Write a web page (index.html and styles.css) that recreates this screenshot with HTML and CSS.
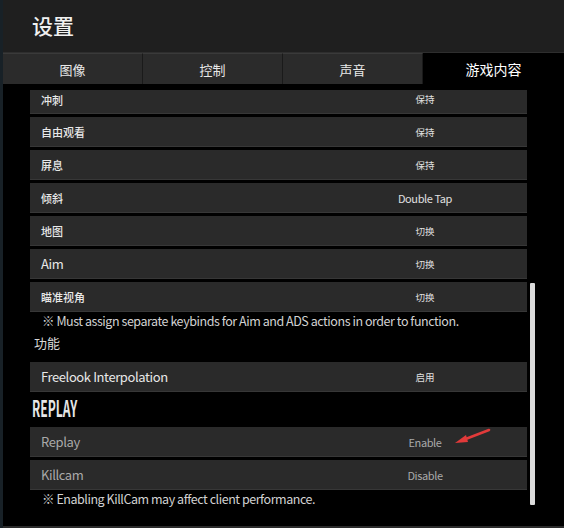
FILE: index.html
```html
<!DOCTYPE html>
<html lang="zh">
<head>
    <meta charset="UTF-8">
    <meta name="viewport" content="width=device-width, initial-scale=1.0">
    <title>设置</title>
    <link rel="stylesheet" href="styles.css">
</head>
<body>
    <div class="window">
        <div class="header">
            <h1 class="title">设置</h1>
        </div>
        <div class="tabs">
            <div class="tab">图像</div>
            <div class="tab">控制</div>
            <div class="tab">声音</div>
            <div class="tab active">游戏内容</div>
        </div>

        <div class="content">
            <div class="row cut"><span class="label">冲刺</span><span class="value">保持</span></div>
            <div class="row"><span class="label">自由观看</span><span class="value">保持</span></div>
            <div class="row"><span class="label">屏息</span><span class="value">保持</span></div>
            <div class="row"><span class="label">倾斜</span><span class="value latin">Double Tap</span></div>
            <div class="row"><span class="label">地图</span><span class="value">切换</span></div>
            <div class="row"><span class="label latin big">Aim</span><span class="value">切换</span></div>
            <div class="row"><span class="label">瞄准视角</span><span class="value">切换</span></div>
            <p class="note">※ Must assign separate keybinds for Aim and ADS actions in order to function.</p>

            <h3 class="section">功能</h3>
            <div class="row"><span class="label latin big">Freelook Interpolation</span><span class="value">启用</span></div>

            <h2 class="replay-title">REPLAY</h2>
            <div class="row dim"><span class="label latin big">Replay</span><span class="value latin">Enable</span></div>
            <div class="row dim"><span class="label latin big">Killcam</span><span class="value latin">Disable</span></div>
            <p class="note">※ Enabling KillCam may affect client performance.</p>

            <div class="scrollbar"></div>
            <svg class="arrow" width="40" height="20" viewBox="0 0 40 20">
                <path d="M36 2 L10 12" stroke="#e23a3a" stroke-width="2.5" stroke-linecap="round"/>
                <path d="M2 15 L13 7 L15 14 Z" fill="#e23a3a"/>
            </svg>
        </div>
        <div class="footer"></div>
    </div>
</body>
</html>
```

FILE: styles.css
```css
/* settings screen */
body {
    margin: 0;
    padding: 0;
    background-color: #000;
    font-family: "Noto Sans CJK SC", sans-serif;
    color: #e4e4e4;
}
.window {
    width: 564px;
    height: 528px;
    display: flex;
    flex-direction: column;
    border-left: 3px solid #182127;
    box-sizing: border-box;
    overflow: hidden;
}
.header {
    height: 53px;
    background-color: #1f1f1f;
    border-bottom: 1px solid #2e2e2e;
    box-sizing: border-box;
    padding: 11px 0 0 29px;
}
.title {
    margin: 0;
    font-size: 21px;
    font-weight: 500;
    line-height: 28px;
    color: #f0f0f0;
}
.tabs {
    display: flex;
    height: 31px;
}
.tab {
    width: 140px;
    background-color: #2b2b2b;
    border-right: 1px solid #1a1a1a;
    border-top: 1px solid #3a3a3a;
    box-sizing: border-box;
    display: flex;
    align-items: center;
    justify-content: center;
    font-size: 13px;
    color: #e8e8e8;
}
.tab.active {
    flex: 1;
    background-color: #000;
    border: none;
    font-size: 14px;
    color: #fff;
}
.content {
    position: relative;
    flex: 1;
    padding: 6px 37px 0 27px;
    display: flex;
    flex-direction: column;
}
.row {
    height: 30px;
    margin-bottom: 3px;
    background-color: #2a2a2a;
    border-bottom: 1px solid #373737;
    box-sizing: border-box;
    display: flex;
    align-items: center;
    justify-content: space-between;
    padding-left: 11px;
}
.row.cut {
    height: 24px;
    align-items: flex-start;
    padding-top: 2px;
}
.label {
    font-size: 11px;
    font-weight: 500;
    color: #e8e8e8;
}
.value {
    width: 204px;
    text-align: center;
    font-size: 9.5px;
    color: #e0e0e0;
}
.latin {
    letter-spacing: -0.4px;
}
.value.latin {
    font-size: 11px;
}
.label.big {
    font-size: 13px;
    font-weight: normal;
}
.row.dim .label,
.row.dim .value {
    color: #a9a9a9;
}
.note {
    margin: -3px 0 0 12px;
    height: 17px;
    line-height: 17px;
    font-size: 12.5px;
    letter-spacing: -0.45px;
    color: #d2d2d2;
}
.section {
    margin: 5px 0 10px 4px;
    font-size: 13px;
    font-weight: normal;
    line-height: 18px;
    color: #d8d8d8;
}
.replay-title {
    margin: 1px 0 9px 2px;
    height: 22px;
    font-size: 22px;
    line-height: 22px;
    font-weight: bold;
    color: #e6e6e6;
    transform: scaleX(0.55);
    transform-origin: left center;
}
.scrollbar {
    position: absolute;
    left: 527px;
    top: 199px;
    width: 5px;
    height: 222px;
    background-color: #dcdcdc;
    border-radius: 1px;
}
.arrow {
    position: absolute;
    left: 450px;
    top: 344px;
}
.footer {
    height: 2px;
    background-color: #2c2c2c;
}
```
